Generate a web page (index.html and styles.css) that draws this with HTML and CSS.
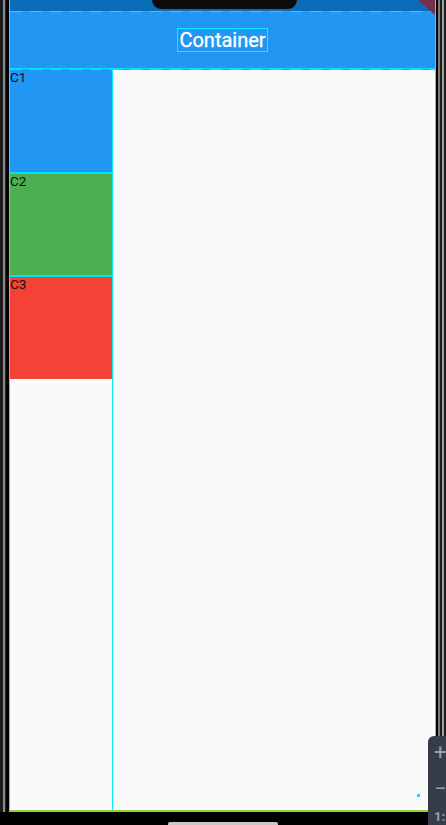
FILE: index.html
```html
<!DOCTYPE html>
<html lang="en">
<head>
  <meta charset="UTF-8" />
  <meta name="viewport" content="width=device-width, initial-scale=1.0" />
  <title>Container</title>
  <link rel="stylesheet" href="styles.css">
</head>
<body>
  <div class="phone">
    <div class="bezel left"></div>
    <div class="screen">
      <div class="status-bar">
        <div class="notch"></div>
        <div class="debug-corner"></div>
      </div>
      <div class="dash"></div>
      <div class="app-bar">
        <span class="title">Container</span>
      </div>
      <div class="dash"></div>
      <div class="content">
        <div class="side">
          <div class="box blue">C1</div>
          <div class="box green">C2</div>
          <div class="box red">C3</div>
        </div>
        <div class="main">
          <div class="dot"></div>
        </div>
      </div>
    </div>
    <div class="bezel right"></div>
  </div>
  <div class="chin">
    <div class="home-bar"></div>
  </div>
  <div class="zoom-panel">
    <span class="plus">+</span>
    <span class="minus">−</span>
    <span class="small">1:</span>
  </div>
</body>
</html>
```

FILE: styles.css
```css
body {
  margin: 0;
  width: 446px;
  height: 825px;
  background: #000;
  font-family: Roboto, "Noto Sans", sans-serif;
  overflow: hidden;
  position: relative;
}
.phone {
  display: flex;
  height: 812px;
}
.bezel {
  flex: none;
}
.bezel.left {
  width: 9px;
  background: linear-gradient(90deg, #1c1c1c 0 3px, #8a8a8a 3px 5px, #2a2a2a 5px 6px, #000 6px 9px);
}
.bezel.right {
  width: 10px;
  background: linear-gradient(90deg, #000 0 2px, #7a7a7a 2px 4px, #1c1c1c 4px 6px, #a0a0a0 6px 8px, #1c1c1c 8px 10px);
}
.screen {
  flex: 1;
  display: flex;
  flex-direction: column;
  border-left: 1px solid #8bd43a;
  border-right: 1px solid #8bd43a;
  border-bottom: 2px solid #8bd43a;
  background: #fafafa;
}
.status-bar {
  height: 11px;
  background: #0b6cb8;
  position: relative;
}
.notch {
  position: absolute;
  left: 142px;
  top: 0;
  width: 145px;
  height: 9px;
  background: #0b0b0b;
  border-radius: 0 0 14px 14px;
}
.debug-corner {
  position: absolute;
  right: 0;
  top: 0;
  width: 17px;
  height: 15px;
  background: #74304e;
  clip-path: polygon(0 0, 100% 0, 100% 100%);
}
.dash {
  height: 1px;
  background: repeating-linear-gradient(90deg, #00e5ff 0 12px, #e040fb 12px 20px);
}
.app-bar {
  height: 56px;
  background: #2196f3;
  display: flex;
  align-items: center;
  justify-content: center;
  border-bottom: 1px solid #00e5ff;
}
.title {
  color: #fff;
  font-size: 20px;
  line-height: 22px;
  border: 1px solid #00f0ff;
  padding: 0 1px;
  -webkit-text-stroke: 0.3px #fff;
}
.content {
  flex: 1;
  display: flex;
}
.side {
  width: 102px;
  border-right: 1px solid #00e5ff;
  display: flex;
  flex-direction: column;
}
.box {
  height: 102px;
  border-top: 2px solid #00e5ff;
  font-size: 13.5px;
  line-height: 15px;
  color: #111;
}
.box.blue {
  border-top: 0;
  height: 102px;
  background: #2196f3;
}
.box.green {
  height: 101px;
  background: #4caf50;
}
.box.red { background: #f44336; }
.main {
  flex: 1;
  position: relative;
}
.dot {
  position: absolute;
  right: 15px;
  bottom: 13px;
  width: 3px;
  height: 3px;
  background: #00e5ff;
}
.chin {
  height: 13px;
  display: flex;
  justify-content: center;
  align-items: flex-end;
}
.home-bar {
  width: 110px;
  height: 3px;
  background: #c8c8c8;
  border-radius: 2px 2px 0 0;
}
.zoom-panel {
  position: absolute;
  left: 428px;
  top: 736px;
  width: 18px;
  height: 89px;
  background: #363c48;
  border-radius: 6px 0 0 0;
  display: flex;
  flex-direction: column;
  color: #9aa0aa;
  font-size: 22px;
  padding-left: 6px;
  box-sizing: border-box;
}
.plus {
  line-height: 34px;
}
.minus {
  line-height: 38px;
}
.zoom-panel .small {
  font-size: 13px;
  font-weight: bold;
  line-height: 18px;
}
```
